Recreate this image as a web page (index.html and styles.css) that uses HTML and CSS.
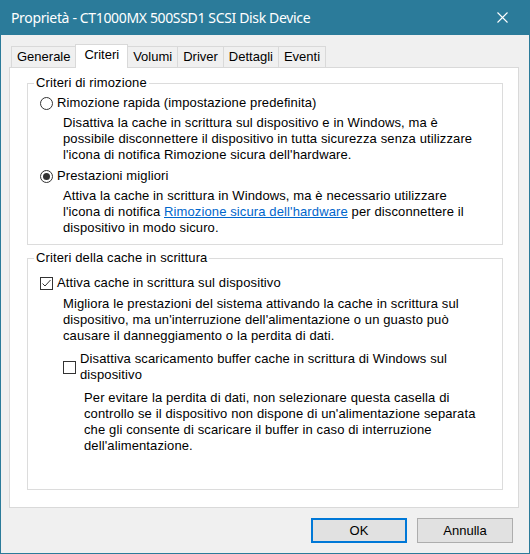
FILE: index.html
```html
<!DOCTYPE html>
<html lang="it">
<head>
    <meta charset="UTF-8">
    <title>Proprietà - CT1000MX 500SSD1 SCSI Disk Device</title>
    <link rel="stylesheet" href="styles.css">
</head>
<body>

<div class="window">
    <div class="titlebar">
        <span class="title">Proprietà - CT1000MX 500SSD1 SCSI Disk Device</span>
        <svg class="close" width="11" height="11" viewBox="0 0 11 11">
            <path d="M0.5 0.5L10.5 10.5M10.5 0.5L0.5 10.5" stroke="#fff" stroke-width="1.1" fill="none"/>
        </svg>
    </div>

    <div class="tabs">
        <div class="tab">Generale</div>
        <div class="tab active">Criteri</div>
        <div class="tab">Volumi</div>
        <div class="tab">Driver</div>
        <div class="tab">Dettagli</div>
        <div class="tab">Eventi</div>
    </div>

    <div class="panel">
        <fieldset class="group removal">
            <legend>Criteri di rimozione</legend>

            <div class="option"><span class="radio"></span>Rimozione rapida (impostazione predefinita)</div>
            <p class="desc">Disattiva la cache in scrittura sul dispositivo e in Windows, ma è<br>possibile disconnettere il dispositivo in tutta sicurezza senza utilizzare<br>l'icona di notifica Rimozione sicura dell'hardware.</p>

            <div class="option second"><span class="radio checked"></span>Prestazioni migliori</div>
            <p class="desc">Attiva la cache in scrittura in Windows, ma è necessario utilizzare<br>l'icona di notifica <a href="#">Rimozione sicura dell'hardware</a> per disconnettere il<br>dispositivo in modo sicuro.</p>
        </fieldset>

        <fieldset class="group cache">
            <legend>Criteri della cache in scrittura</legend>

            <div class="option"><span class="check"><svg width="11" height="11" viewBox="0 0 11 11"><path d="M1.5 5.5L4 8L9.5 2" stroke="#333" stroke-width="1" fill="none"/></svg></span>Attiva cache in scrittura sul dispositivo</div>
            <p class="desc">Migliora le prestazioni del sistema attivando la cache in scrittura sul<br>dispositivo, ma un'interruzione dell'alimentazione o un guasto può<br>causare il danneggiamento o la perdita di dati.</p>

            <div class="option sub"><span class="check"></span><span>Disattiva scaricamento buffer cache in scrittura di Windows sul<br>dispositivo</span></div>
            <p class="desc sub-desc">Per evitare la perdita di dati, non selezionare questa casella di<br>controllo se il dispositivo non dispone di un'alimentazione separata<br>che gli consente di scaricare il buffer in caso di interruzione<br>dell'alimentazione.</p>
        </fieldset>
    </div>

    <div class="buttons">
        <button class="btn default">OK</button>
        <button class="btn">Annulla</button>
    </div>
</div>

</body>
</html>
```

FILE: styles.css
```css
* {
    box-sizing: border-box;
}
html, body {
    margin: 0;
}
body {
    width: 530px;
    height: 554px;
    font-family: "Liberation Sans", Arial, sans-serif;
    font-size: 13px;
    color: #000;
}

.window {
    display: flex;
    flex-direction: column;
    height: 554px;
    background: #f0f0f0;
    border: 1px solid #2b7b9a;
    border-top: none;
}

/* barra del titolo */
.titlebar {
    flex-shrink: 0;
    height: 35px;
    display: flex;
    align-items: center;
    justify-content: space-between;
    padding: 0 21px 0 10px;
    background: #2b7b9a;
    color: #fff;
    font-family: "Noto Sans", sans-serif;
    font-size: 14px;
    letter-spacing: -0.35px;
}
.close {
    display: block;
}

/* schede */
.tabs {
    flex-shrink: 0;
    display: flex;
    align-items: flex-end;
    height: 23px;
    margin: 9px 10px 0 8px;
    padding-left: 2px;
}
.tab {
    height: 21px;
    padding: 0 5px;
    margin-left: -1px;
    border: 1px solid #d9d9d9;
    border-bottom: none;
    background: #f0f0f0;
    line-height: 20px;
}
.tab:first-child {
    margin-left: 0;
}
.tab.active {
    position: relative;
    z-index: 2;
    height: 24px;
    margin-bottom: -1px;
    padding: 0 8px;
    background: #fff;
    line-height: 20px;
}

.panel {
    flex: 1;
    display: flex;
    flex-direction: column;
    margin: 0 10px 0 8px;
    padding: 7px 15px 17px 17px;
    background: #fff;
    border: 1px solid #d9d9d9;
    letter-spacing: 0.12px;
}

/* gruppi */
.group {
    margin: 0;
    padding: 4px 12px 8px 12px;
    border: 1px solid #dcdcdc;
}
.group legend {
    margin-left: -6px;
    padding: 0 2px;
    line-height: 16px;
}
.group.cache {
    flex: 1;
    margin-top: 5px;
    padding-top: 9px;
}

.option {
    display: flex;
    align-items: center;
    line-height: 16px;
}
.option.second {
    margin-top: 5px;
}
.option.sub {
    margin: 7px 0 0 23px;
}

.radio {
    flex-shrink: 0;
    display: flex;
    align-items: center;
    justify-content: center;
    width: 13px;
    height: 13px;
    margin-right: 4px;
    border: 1px solid #333;
    border-radius: 50%;
    background: #fff;
}
.radio.checked::after {
    content: "";
    width: 7px;
    height: 7px;
    border-radius: 50%;
    background: #333;
}
.check {
    flex-shrink: 0;
    width: 13px;
    height: 13px;
    margin-right: 4px;
    border: 1px solid #333;
    background: #fff;
}
.check svg {
    display: block;
}

.desc {
    margin: 4px 0 0 23px;
    line-height: 16px;
}
.group.cache .desc {
    margin-top: 5px;
}
.group.cache .sub-desc {
    margin: 7px 0 0 44px;
}
.desc a {
    color: #0066cc;
}

/* pulsanti */
.buttons {
    flex-shrink: 0;
    display: flex;
    justify-content: flex-end;
    gap: 10px;
    padding: 10px 16px 10px 0;
}
.btn {
    width: 96px;
    height: 25px;
    padding: 0;
    font-family: "Liberation Sans", Arial, sans-serif;
    font-size: 13px;
    color: #000;
    background: #e1e1e1;
    border: 1px solid #adadad;
}
.btn.default {
    border: 2px solid #0078d7;
}
```
